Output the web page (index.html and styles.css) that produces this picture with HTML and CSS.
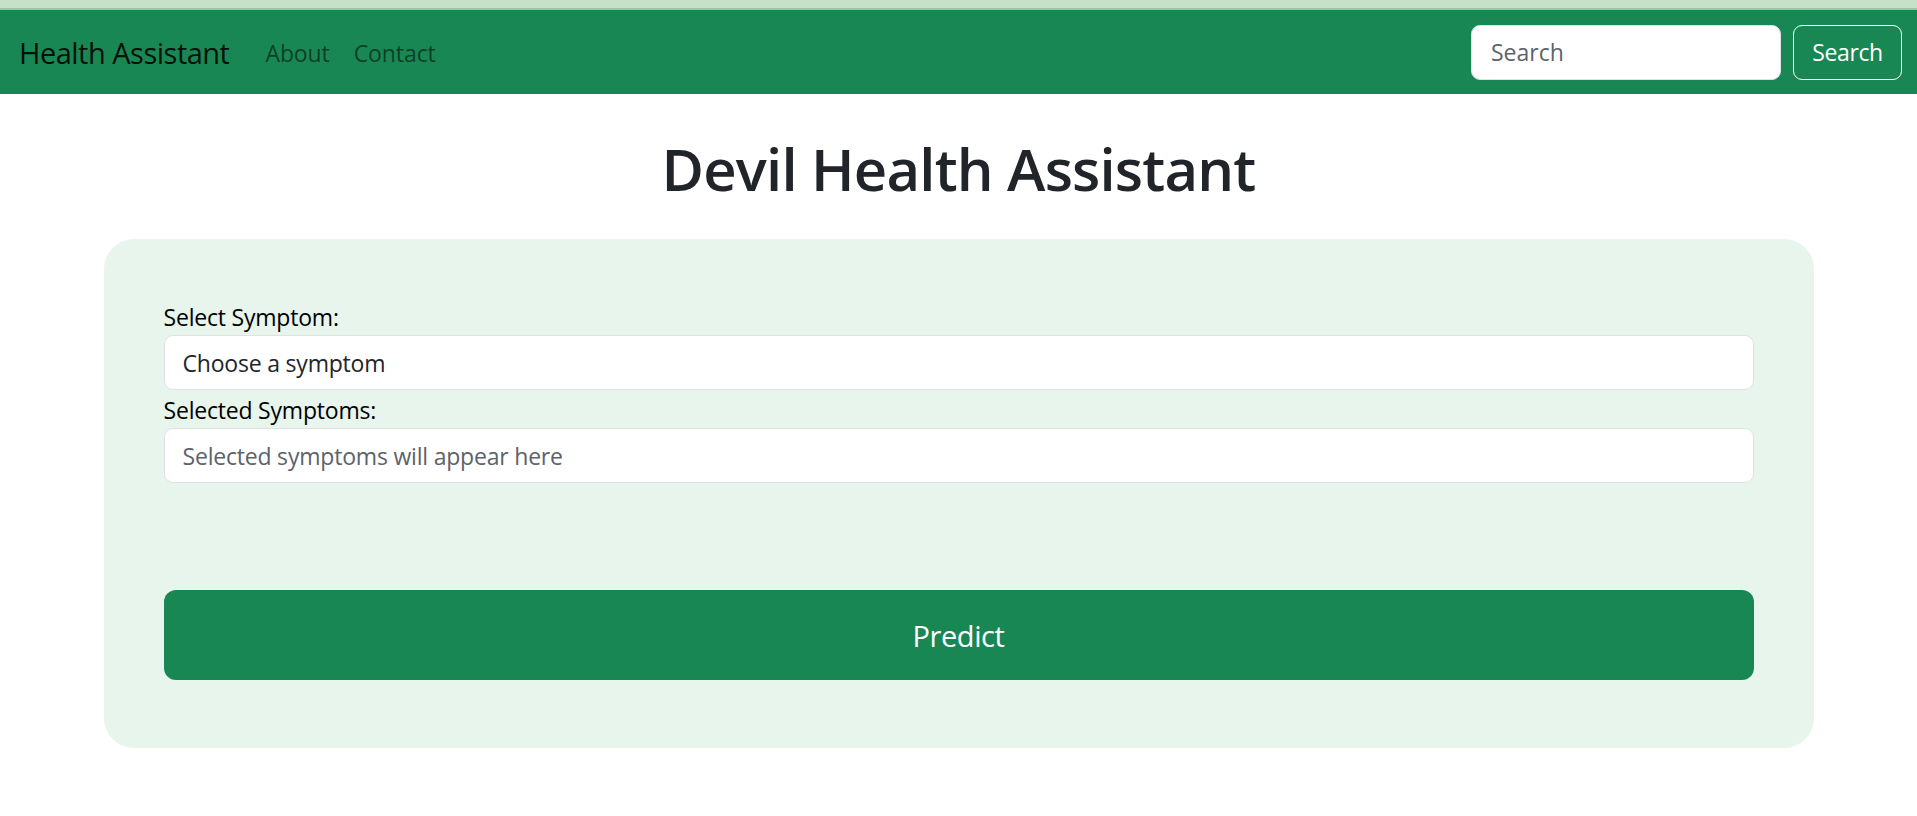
FILE: index.html
```html
<!DOCTYPE html>
<html lang="en">
<head>
<meta charset="utf-8">
<title>Health Assistant</title>
<link rel="stylesheet" href="styles.css">
</head>
<body>
<div class="topstrip"></div>
<nav class="navbar">
  <a class="brand" href="#">Health Assistant</a>
  <ul class="nav-links">
    <li><a href="#">About</a></li>
    <li><a href="#">Contact</a></li>
  </ul>
  <form class="search">
    <input class="search-input" type="text" placeholder="Search">
    <button class="search-btn" type="button">Search</button>
  </form>
</nav>
<main class="main">
  <h1 class="title">Devil Health Assistant</h1>
  <section class="card">
    <label class="label">Select Symptom:</label>
    <div class="field">Choose a symptom</div>
    <label class="label">Selected Symptoms:</label>
    <div class="field placeholder">Selected symptoms will appear here</div>
    <button class="predict" type="button">Predict</button>
  </section>
</main>
</body>
</html>
```

FILE: styles.css
```css
* { box-sizing: border-box; }
html, body { margin: 0; padding: 0; background: #fff; }
body {
  font-family: "Open Sans", "Noto Sans", sans-serif;
  color: #212529;
  font-size: 24px;
}
.topstrip {
  height: 10px;
  background: #c5e1c7;
  border-bottom: 2px solid #a8c0aa;
}
.navbar {
  display: flex;
  align-items: center;
  height: 84px;
  background: #198754;
  padding: 0 15px 0 19px;
}
.brand {
  font-size: 29px;
  color: rgba(0,0,0,.9);
  text-decoration: none;
  letter-spacing: -0.5px;
  margin-right: 36px;
}
.nav-links {
  display: flex;
  gap: 24px;
  list-style: none;
  margin: 0;
  padding: 0;
  flex: 1;
}
.nav-links a {
  color: rgba(0,0,0,.55);
  text-decoration: none;
  font-size: 23px;
  letter-spacing: -0.1px;
}
.search {
  display: flex;
  gap: 12px;
}
.search-input {
  width: 310px;
  height: 55px;
  border: 1px solid #dee2e6;
  border-radius: 9px;
  padding: 0 19px;
  font: inherit;
  font-size: 23px;
  color: #212529;
  background: #fff;
}
.search-input::placeholder { color: #5c636a; }
.search-btn {
  width: 109px;
  height: 55px;
  border: 1px solid #fff;
  border-radius: 9px;
  background: transparent;
  color: #fff;
  font: inherit;
  font-size: 23px;
  letter-spacing: -0.4px;
}
.main {
  width: 1710px;
  margin: 0 auto;
}
.title {
  margin: 39px 0 34px;
  text-align: center;
  font-size: 58px;
  font-weight: 600;
  line-height: 72px;
  letter-spacing: -0.8px;
  color: #212529;
}
.card {
  display: flex;
  flex-direction: column;
  background: #e8f5ec;
  border-radius: 30px;
  padding: 60px 60px 68px;
}
.label {
  font-size: 23px;
  line-height: 36px;
  color: #000;
  letter-spacing: -0.2px;
}
.field {
  height: 55px;
  display: flex;
  align-items: center;
  background: #fff;
  border: 1px solid #dee2e6;
  border-radius: 9px;
  padding: 0 18px;
  font-size: 23px;
  letter-spacing: -0.2px;
  color: #212529;
}
.field + .label { margin-top: 2px; }
.field.placeholder { color: #5c636a; }
.predict {
  margin-top: 107px;
  height: 90px;
  border: none;
  border-radius: 12px;
  background: #198754;
  color: #fff;
  font: inherit;
  font-size: 29px;
  letter-spacing: -0.4px;
}
```
